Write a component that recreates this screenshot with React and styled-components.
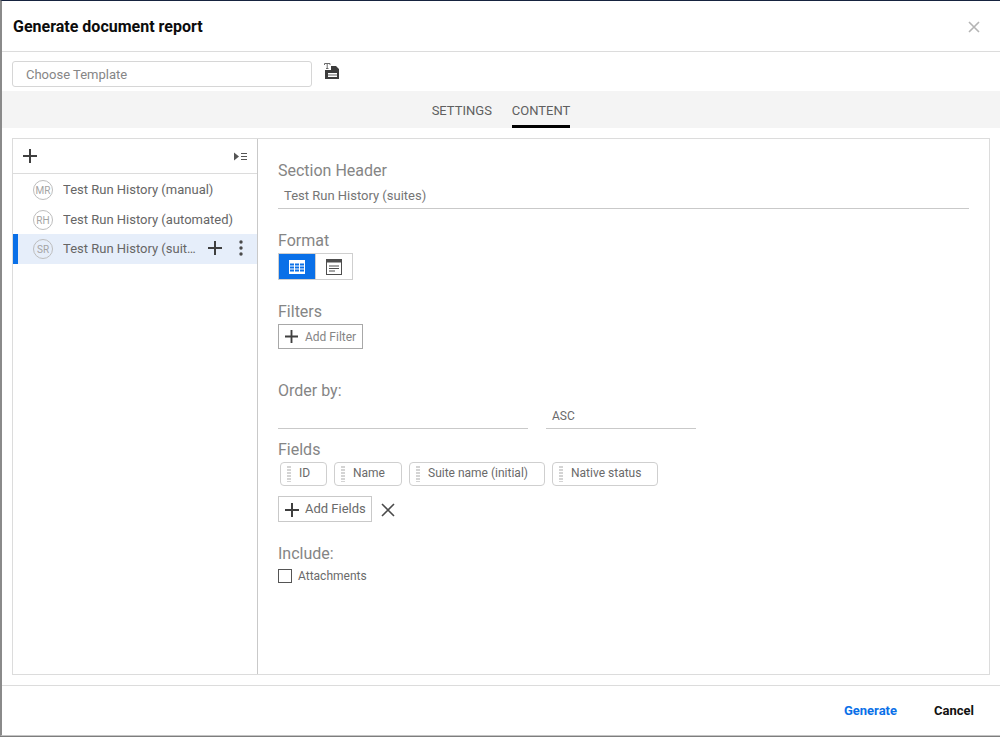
import React from "react";
import styled, { createGlobalStyle } from "styled-components";

const Global = createGlobalStyle`
  html, body { margin: 0; padding: 0; background: #fff; }
  body { font-family: Roboto, "Liberation Sans", sans-serif; }
  * { box-sizing: border-box; }
`;

const Page = styled.div`
  width: 1000px; height: 737px; display: flex; flex-direction: column;
  overflow: hidden; background: #7d7d7d;
`;
const Modal = styled.div`
  height: 736px; display: flex; flex-direction: column; background: #fff;
  border-top: 1px solid #16233f; border-left: 2px solid #8a8a8a;
  border-bottom: 1px solid #c4c4c4;
`;
const Header = styled.header`
  height: 51px; flex: none; display: flex; align-items: center; justify-content: space-between;
  padding: 2px 20px 0 11px; border-bottom: 1px solid #dcdcdc;
`;
const Title = styled.h1`
  margin: 0; font-size: 16px; line-height: 20px; font-weight: 700; color: #0c0c0c;
`;
const CloseIcon = styled.svg`
  width: 12px; height: 12px; display: block; margin-top: -1px; stroke: #b4b4b4; stroke-width: 1.6; fill: none;
`;
const Toolbar = styled.div`
  height: 39px; flex: none; display: flex; align-items: flex-start; padding: 9px 0 0 10px; gap: 11px;
`;
const TemplateInput = styled.div`
  width: 300px; height: 26px; border: 1px solid #d6d6d6; border-radius: 3px;
  padding-left: 13px; font-size: 13px; line-height: 25px; color: #868686;
`;
const SaveIcon = styled.svg`
  width: 18px; height: 20px; display: block;
`;
const TabBar = styled.nav`
  height: 37px; flex: none; background: #f4f4f4; display: flex; justify-content: center; gap: 20px;
`;
const Tab = styled.div`
  height: 37px; font-size: 13px; line-height: 39px; padding: 0; color: #5f5f5f;
  border-bottom: 3px solid ${p => (p.$active ? "#000" : "transparent")};
`;
const Panel = styled.div`
  width: 978px; height: 537px; flex: none; margin: 10px 0 0 10px; display: flex;
  border: 1px solid #dcdcdc;
`;
const Side = styled.aside`
  width: 245px; flex: none; border-right: 1px solid #c9c9c9; display: flex; flex-direction: column;
`;
const SideHead = styled.div`
  height: 35px; flex: none; border-bottom: 1px solid #dcdcdc; display: flex; align-items: center;
  justify-content: space-between; padding: 0 10px 0 10px;
`;
const Plus = styled.svg`
  width: ${p => p.$size || 14}px; height: ${p => p.$size || 14}px; display: block; flex: none;
  stroke: #3f3f3f; stroke-width: 2; fill: none; margin-top: ${p => p.$lift || 0}px;
`;
const CollapseIcon = styled.svg`
  width: 13px; height: 9px; display: block; fill: #555;
`;
const Row = styled.div`
  height: 30px; display: flex; align-items: center; position: relative; padding-left: 20px;
  padding-top: ${p => (p.$selected ? 0 : 2)}px;
  background: ${p => (p.$selected ? "#e6eefa" : "transparent")};
`;
const RowMarker = styled.span`
  position: absolute; left: 0; top: 0; bottom: 0; width: 5px; background: #0a70e8;
`;
const Avatar = styled.span`
  width: 20px; height: 20px; flex: none; border: 1px solid #bdbdbd; border-radius: 50%;
  display: flex; align-items: center; justify-content: center; font-size: 10px; color: #a4a4a4;
`;
const RowLabel = styled.span`
  margin-left: 10px; font-size: 13px; line-height: 16px; color: #666; white-space: nowrap;
  overflow: hidden; text-overflow: ellipsis; width: ${p => (p.$short ? "134px" : "auto")};
`;
const RowActions = styled.div`
  display: flex; align-items: center; margin-left: 11px; margin-top: -3px; gap: 17px;
`;
const Dots = styled.svg`
  width: 4px; height: 16px; display: block; fill: #4a4a4a;
`;
const Main = styled.main`
  flex: 1; padding: 22px 20px 0 20px; display: flex; flex-direction: column;
`;
const Label = styled.div`
  font-size: 16px; line-height: 20px; color: #858585; margin-top: ${p => p.$top || 0}px;
`;
const HeaderValue = styled.div`
  height: 28px; font-size: 13px; line-height: 29px; color: #757575; padding-left: 6px;
  border-bottom: 1px solid #c9c9c9;
`;
const ToggleGroup = styled.div`
  display: flex; width: 75px; height: 27px; margin-top: 2px; border: 1px solid #cfcfcf;
`;
const Toggle = styled.div`
  width: ${p => (p.$active ? 36 : 37)}px; display: flex; align-items: center; justify-content: center;
  background: ${p => (p.$active ? "#0a70e8" : "#fff")};
  border-left: ${p => (p.$active ? "0" : "1px solid #cfcfcf")};
`;
const ToggleIcon = styled.svg`
  width: 16px; height: 16px; display: block;
`;
const FilterButton = styled.div`
  width: 85px; height: 25px; margin-top: 2px; border: 1px solid #a8a8a8; display: flex; align-items: center;
  padding-left: 6px; gap: 7px; font-size: 12px; color: #858585;
`;
const OrderRow = styled.div`
  display: flex; gap: 18px; margin-top: 2px;
`;
const OrderField = styled.div`
  width: ${p => p.$w}px; height: 26px; border-bottom: 1px solid #c9c9c9; padding-left: ${p => (p.$w < 200 ? 6 : 0)}px;
  font-size: 12px; line-height: 26px; color: #6a6a6a;
`;
const Chips = styled.div`
  display: flex; gap: 7px; padding-left: 2px; margin-top: 2px;
`;
const Chip = styled.div`
  width: ${p => p.$w}px; height: 24px; border: 1px solid #cfcfcf; border-radius: 4px; display: flex;
  align-items: center; padding: 0 0 2px 6px; font-size: 12px; color: #6a6a6a;
`;
const Grip = styled.span`
  width: 4px; height: 16px; margin: 2px 8px 0 0; flex: none;
  background: repeating-linear-gradient(to bottom, #d4d4d4 0 2px, transparent 2px 3px);
`;
const FieldActions = styled.div`
  display: flex; align-items: center; gap: 9px; margin-top: 10px;
`;
const FieldsButton = styled.div`
  width: 94px; height: 26px; border: 1px solid #c9c9c9; display: flex; align-items: center;
  padding: 0 0 2px 6px; gap: 6px; font-size: 13px; color: #6a6a6a;
`;
const RemoveIcon = styled.svg`
  width: 14px; height: 14px; display: block; margin-top: 2px; stroke: #4a4a4a; stroke-width: 1.6; fill: none;
`;
const CheckRow = styled.label`
  display: flex; align-items: flex-start; gap: 6px; margin-top: 5px; font-size: 12px; line-height: 14px;
  color: #6a6a6a;
`;
const CheckBox = styled.span`
  width: 14px; height: 14px; border: 1px solid #555; display: block; flex: none;
`;
const Footer = styled.footer`
  height: 50px; flex: none; margin-top: 10px; border-top: 1px solid #dcdcdc; display: flex;
  align-items: center; justify-content: flex-end; padding: 0 26px 0 0; gap: 37px;
`;
const FootButton = styled.button`
  border: 0; background: none; padding: 0; font-family: inherit; font-size: 13px; font-weight: 700;
  color: ${p => (p.$primary ? "#0a70e8" : "#111")};
`;

const PlusPath = ({ size = 14, lift = 0 }) => (
  <Plus $size={size} $lift={lift} viewBox="0 0 14 14"><path d="M7 0V14M0 7H14" /></Plus>
);

export default function App() {
  return (
    <Page>
      <Global />
      <Modal>
        <Header>
          <Title>Generate document report</Title>
          <CloseIcon viewBox="0 0 12 12"><path d="M1 1L11 11M11 1L1 11" /></CloseIcon>
        </Header>
        <Toolbar>
          <TemplateInput>Choose Template</TemplateInput>
          <SaveIcon viewBox="0 0 18 20">
            <path fill="#3c3c3c" d="M8 5H13L16 8V18H2V9H8Z" />
            <path fill="#fff" d="M5 12h9v4H5z" />
            <path fill="#3c3c3c" d="M5 13.6h9v.8H5z" />
            <path fill="none" stroke="#6a6a6a" strokeWidth="1" d="M1.5 4V2.5H7V4M4.2 2.5V7.5M3 7.5H5.5" />
          </SaveIcon>
        </Toolbar>
        <TabBar>
          <Tab>SETTINGS</Tab>
          <Tab $active>CONTENT</Tab>
        </TabBar>
        <Panel>
          <Side>
            <SideHead>
              <PlusPath />
              <CollapseIcon viewBox="0 0 13 9">
                <path d="M0 0.5L5 4.5L0 8.5Z" />
                <path d="M7 1h6v1H7zM7 4h6v1H7zM7 7h6v1H7z" />
              </CollapseIcon>
            </SideHead>
            <Row>
              <Avatar>MR</Avatar>
              <RowLabel>Test Run History (manual)</RowLabel>
            </Row>
            <Row>
              <Avatar>RH</Avatar>
              <RowLabel>Test Run History (automated)</RowLabel>
            </Row>
            <Row $selected>
              <RowMarker />
              <Avatar>SR</Avatar>
              <RowLabel $short>Test Run History (suites)</RowLabel>
              <RowActions>
                <PlusPath />
                <Dots viewBox="0 0 4 16">
                  <circle cx="2" cy="2" r="1.7" />
                  <circle cx="2" cy="8" r="1.7" />
                  <circle cx="2" cy="14" r="1.7" />
                </Dots>
              </RowActions>
            </Row>
          </Side>
          <Main>
            <Label>Section Header</Label>
            <HeaderValue>Test Run History (suites)</HeaderValue>
            <Label $top={22}>Format</Label>
            <ToggleGroup>
              <Toggle $active>
                <ToggleIcon viewBox="0 0 16 16">
                  <path fill="#fff" d="M0 1h16v14H0z" />
                  <path fill="#0a70e8" d="M1 4.5h4v2H1zM6 4.5h4v2H6zM11 4.5h4v2h-4zM1 7.5h4v2H1zM6 7.5h4v2H6zM11 7.5h4v2h-4zM1 10.5h4v2H1zM6 10.5h4v2H6zM11 10.5h4v2h-4z" />
                </ToggleIcon>
              </Toggle>
              <Toggle>
                <ToggleIcon viewBox="0 0 16 16">
                  <path fill="#4d4d4d" d="M0 0h16v16H0z" />
                  <path fill="#fff" d="M1 3.5h14V15H1z" />
                  <path fill="#4d4d4d" d="M3 6.5h10v1H3zM3 9h10v1H3zM3 11.5h6v1H3z" />
                </ToggleIcon>
              </Toggle>
            </ToggleGroup>
            <Label $top={22}>Filters</Label>
            <FilterButton>
              <PlusPath size={13} />
              Add Filter
            </FilterButton>
            <Label $top={32}>Order by:</Label>
            <OrderRow>
              <OrderField $w={250} />
              <OrderField $w={150}>ASC</OrderField>
            </OrderRow>
            <Label $top={11}>Fields</Label>
            <Chips>
              <Chip $w={47}><Grip />ID</Chip>
              <Chip $w={68}><Grip />Name</Chip>
              <Chip $w={136}><Grip />Suite name (initial)</Chip>
              <Chip $w={106}><Grip />Native status</Chip>
            </Chips>
            <FieldActions>
              <FieldsButton>
                <PlusPath size={14} lift={3} />
                Add Fields
              </FieldsButton>
              <RemoveIcon viewBox="0 0 14 14"><path d="M1 1L13 13M13 1L1 13" /></RemoveIcon>
            </FieldActions>
            <Label $top={22}>Include:</Label>
            <CheckRow>
              <CheckBox />
              Attachments
            </CheckRow>
          </Main>
        </Panel>
        <Footer>
          <FootButton $primary>Generate</FootButton>
          <FootButton>Cancel</FootButton>
        </Footer>
      </Modal>
    </Page>
  );
}
